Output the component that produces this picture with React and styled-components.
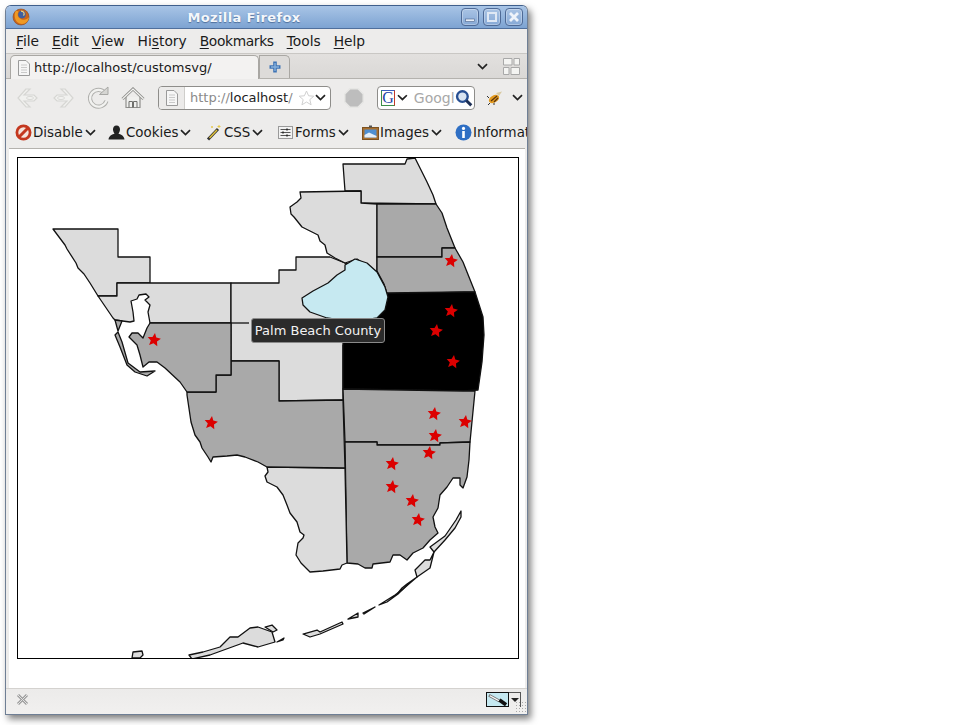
import React from "react";
import styled, { createGlobalStyle } from "styled-components";

const GlobalStyle = createGlobalStyle`
  html, body {
    margin: 0;
    padding: 0;
    background: #fff;
    font-family: "DejaVu Sans", sans-serif;
  }
`;

const LIGHT = "#dcdcdc";
const MID = "#a9a9a9";

const counties = [
  { fill: LIGHT, pts: "53,229 118,229 118,257 150,257 150,283 117,283 117,296 98,296 90,283 84,274 78,268 76,263 67,249 65,245" },
  { fill: LIGHT, pts: "117,283 231,283 231,323 150,323 148,312 150,305 145,300 149,297 146,294 139,295 137,299 131,301 133,312 134,321 130,322 115,320 113,318 98,296 117,296" },
  { fill: MID, pts: "115,320 122,321 118,331" },
  { fill: LIGHT, pts: "231,283 279,283 279,270 296,270 296,257 330,257 345,263 377,272 388,297 377,330 343,345 343,400 279,401 279,361 231,361" },
  { fill: LIGHT, pts: "343,164 405,164 407,159 415,158 420,168 427,182 433,195 436,204 361,203 361,191 345,191" },
  { fill: LIGHT, pts: "300,192 361,191 361,203 377,204 377,272 357,259 345,263 335,258 327,253 325,245 320,241 318,235 310,231 302,227 294,217 291,214 290,207 297,202 301,198" },
  { fill: MID, pts: "377,204 436,204 442,213 447,228 455,248 442,248 442,257 377,257" },
  { fill: MID, pts: "377,257 442,257 442,248 455,248 463,262 475,292 387,294 384,284 377,271" },
  { fill: "#000", pts: "387,293 465,292 475,292 483,317 484,335 482,362 478,390 463,391 343,389 343,330 375,318 385,305" },
  { fill: MID, pts: "343,389 463,391 475,391 470,442 440,443 440,445 377,445 377,442 345,442" },
  { fill: MID, pts: "345,442 377,442 377,445 440,445 440,443 470,442 469,460 467,477 463,488 460,485 460,478 453,478 447,487 440,495 438,508 433,517 435,527 438,533 430,540 423,548 413,553 407,560 400,555 393,555 390,562 373,564 372,568 365,568 358,564 347,563" },
  { fill: LIGHT, pts: "267,467 345,468 347,563 342,565 340,569 323,571 310,572 301,563 296,555 298,543 303,538 304,535 300,532 297,522 290,513 287,505 283,495 277,487 267,482 265,476 268,472" },
  { fill: MID, pts: "187,392 216,392 216,375 231,375 231,361 279,361 279,401 343,400 345,468 267,467 258,462 245,457 237,455 227,456 213,457 211,462 208,457 202,448 200,442 195,435 191,422 187,395" },
  { fill: MID, pts: "150,323 231,323 231,375 216,375 216,392 187,392 180,382 165,368 157,362 149,362 143,367 140,355 137,345 129,337 132,333 138,333 143,338 147,328" },
  { fill: MID, pts: "115,335 118,332 122,342 128,363 140,372 155,371 147,376 135,372 127,365 120,347" },
  { fill: "#c6e9f1", pts: "345,265 355,259 367,263 377,272 385,287 388,297 385,310 377,318 353,322 327,318 310,312 303,305 302,298 313,291 328,283 337,275 345,270" },
  { fill: LIGHT, pts: "189,655 192,659 210,655 243,643 258,647 275,642 272,632 258,627 250,628 238,637 230,637 220,647 203,652" },
  { fill: LIGHT, pts: "265,627 272,625 277,630 273,632" },
  { fill: LIGHT, pts: "132,658 133,652 142,651 143,655 140,658" },
  { fill: LIGHT, pts: "277,642 284,638 283,640" },
  { fill: LIGHT, pts: "303,634 317,630 320,632 342,622 343,624 320,634 310,637" },
  { fill: LIGHT, pts: "348,619 358,613 358,617" },
  { fill: LIGHT, pts: "363,613 375,607 364,614" },
  { fill: LIGHT, pts: "379,605 387,600 395,595 403,589 408,584 402,590 398,594 387,602" },
  { fill: LIGHT, pts: "398,593 402,588 407,584 417,577 410,583 402,590" },
  { fill: LIGHT, pts: "425,560 430,560 434,552 430,568 417,577 415,570" },
  { fill: LIGHT, pts: "461,511 461,517 455,528 445,540 434,552 430,547 445,536 456,520" },
];

const stars = [
  [154, 340], [211, 423], [451, 261], [451, 311], [436, 331], [453, 362], [434, 414],
  [465, 422], [435, 436], [429, 453], [392, 464], [392, 487], [412, 501], [418, 520],
];

function starPoints(cx, cy) {
  const out = [];
  for (let i = 0; i < 10; i++) {
    const r = i % 2 === 0 ? 7 : 3.3;
    const a = ((i * 36 - 82) * Math.PI) / 180;
    out.push(`${(cx + r * Math.cos(a)).toFixed(1)},${(cy + r * Math.sin(a)).toFixed(1)}`);
  }
  return out.join(" ");
}

const menus = [
  ["F", "ile"],
  ["E", "dit"],
  ["V", "iew"],
  ["Hi", "s", "tory"],
  ["B", "ookmarks"],
  ["T", "ools"],
  ["H", "elp"],
];

function Chevron() {
  return (
    <svg width="11" height="7" viewBox="0 0 11 7">
      <path d="M1 1.2 L5.5 5.5 L10 1.2" fill="none" stroke="#222" strokeWidth="1.7" />
    </svg>
  );
}

function PageIcon() {
  return (
    <svg width="14" height="16" viewBox="0 0 14 16">
      <path d="M1.5 .5 H9 L12.5 4 V15.5 H1.5 Z" fill="#f6f6f6" stroke="#9a9a9a" />
      <path d="M4 5 H10 M4 7.5 H10 M4 10 H10 M4 12.5 H10" stroke="#c9c9c9" />
    </svg>
  );
}

function Logo() {
  return (
    <svg width="18" height="18" viewBox="0 0 18 18">
      <circle cx="9" cy="9" r="8" fill="#c9641c" stroke="#8a4a1c" strokeWidth=".6" />
      <circle cx="10" cy="6.6" r="3.8" fill="#3f5f9f" />
      <path d="M4 2.5 C1 7 3 16 10 16 C14 16 16.5 13 17 9 C15 12 11 12.6 8 10.6 C5.6 9 5 6 6.5 3.5 Z" fill="#ef9a24" />
      <path d="M9 3.2 C12 3.2 13 5.6 11.5 7.6" fill="none" stroke="#f4d27a" strokeWidth="1.2" />
    </svg>
  );
}

function WinButton({ kind }) {
  return (
    <WinBtn>
      <svg width="12" height="12" viewBox="0 0 12 12">
        {kind === "min" && <rect x="1.5" y="8" width="9" height="2.6" fill="#e8eef7" stroke="#47618a" strokeWidth=".6" />}
        {kind === "max" && <rect x="2" y="2" width="8" height="8" fill="none" stroke="#dfe8f4" strokeWidth="2" />}
        {kind === "close" && <path d="M2 2 L10 10 M10 2 L2 10" stroke="#eef3fa" strokeWidth="2.8" />}
      </svg>
    </WinBtn>
  );
}

const bookmarkIcons = {
  disable: (
    <svg width="17" height="17" viewBox="0 0 17 17">
      <circle cx="8.5" cy="8.5" r="6.6" fill="#f4e4dc" stroke="#c4381f" strokeWidth="2.8" />
      <path d="M4 13 L13 4" stroke="#c4381f" strokeWidth="3" />
    </svg>
  ),
  cookies: (
    <svg width="17" height="15" viewBox="0 0 17 15">
      <path d="M8.5 .5 C11 .5 12 2.4 12 4.4 C12 6.4 11 7.6 10.4 8.6 C12.5 9.6 16 10.5 16.5 14.5 H.5 C1 10.5 4.5 9.6 6.6 8.6 C6 7.6 5 6.4 5 4.4 C5 2.4 6 .5 8.5 .5 Z" fill="#222" />
    </svg>
  ),
  css: (
    <svg width="17" height="17" viewBox="0 0 17 17">
      <path d="M2 15.5 L12 5" stroke="#333" strokeWidth="3" />
      <path d="M3.5 14 L11 6" stroke="#e2c33a" strokeWidth="1.4" />
      <path d="M13 1 V4 M11.5 2.5 H14.5 M6 2 V4 M5 3 H7" stroke="#e6c84a" />
    </svg>
  ),
  forms: (
    <svg width="15" height="15" viewBox="0 0 15 15">
      <rect x=".5" y="1.5" width="14" height="12" fill="#f2f2f2" stroke="#9a9a9a" />
      <path d="M2.5 4.5 H12.5 M2.5 7.5 H12.5 M2.5 10.5 H12.5" stroke="#555" />
      <path d="M9 3.5 V5.5 M5 6.5 V8.5 M9 9.5 V11.5" stroke="#222" strokeWidth="1.4" />
    </svg>
  ),
  images: (
    <svg width="17" height="15" viewBox="0 0 17 15">
      <rect x=".5" y="2.5" width="16" height="12" fill="#a86f2e" stroke="#7d5220" />
      <rect x="2.5" y="4.5" width="12" height="8" fill="#4f8fd0" />
      <path d="M2.5 10 L7 7.5 L14.5 11 V12.5 H2.5 Z" fill="#e6f0f8" />
      <rect x="7" y=".5" width="3" height="2" fill="#555" />
    </svg>
  ),
  info: (
    <svg width="17" height="17" viewBox="0 0 17 17">
      <circle cx="8.5" cy="8.5" r="8" fill="#2f6fc4" />
      <circle cx="8.5" cy="4.4" r="1.6" fill="#fff" />
      <rect x="7.2" y="7" width="2.6" height="7" fill="#fff" />
    </svg>
  ),
};

const bookmarks = [
  { icon: "disable", label: "Disable", width: 93 },
  { icon: "cookies", label: "Cookies", width: 98 },
  { icon: "css", label: "CSS", width: 71 },
  { icon: "forms", label: "Forms", width: 85 },
  { icon: "images", label: "Images", width: 93 },
];

export default function App() {
  return (
    <>
      <GlobalStyle />
      <Page>
        <Window>
          <TitleBar>
            <LogoSlot>
              <Logo />
            </LogoSlot>
            <Title>Mozilla Firefox</Title>
            <WinButtons>
              <WinButton kind="min" />
              <WinButton kind="max" />
              <WinButton kind="close" />
            </WinButtons>
          </TitleBar>

          <MenuBar>
            {menus.map((m) => (
              <MenuItem key={m.join("")} $tight={m[1] === "ookmarks"}>
                {m.length === 3 ? (
                  <>
                    {m[0]}
                    <u>{m[1]}</u>
                    {m[2]}
                  </>
                ) : (
                  <>
                    <u>{m[0]}</u>
                    {m[1]}
                  </>
                )}
              </MenuItem>
            ))}
          </MenuBar>

          <TabBar>
            <Tab>
              <PageIcon />
              <span>http://localhost/customsvg/</span>
            </Tab>
            <NewTab>
              <svg width="14" height="14" viewBox="0 0 14 14">
                <path d="M7 1.5 V12.5 M1.5 7 H12.5" stroke="#3f74b5" strokeWidth="3.6" />
                <path d="M7 3 V11 M3 7 H11" stroke="#86b0dc" strokeWidth="1.4" />
              </svg>
            </NewTab>
            <TabTools>
              <Chevron />
              <svg width="17" height="17" viewBox="0 0 17 17">
                <path d="M.5 .5 H9 V7 H.5 Z M11 .5 H16.5 V7 H11 Z M.5 9.5 H6 V16.5 H.5 Z M8 9.5 H16.5 V16.5 H8 Z" fill="#f4f4f2" stroke="#a8a8a8" />
              </svg>
            </TabTools>
          </TabBar>

          <NavBar>
            <NavIcon>
              <svg width="24" height="22" viewBox="0 0 24 22">
                <path d="M10 2 L2 11 L10 20 L14 20 L8 14 H18 L21 11 L18 8 H8 L14 2 Z" fill="#f1f1ef" stroke="#d6d6d3" strokeWidth="1.2" />
                <ellipse cx="14" cy="11" rx="3.5" ry="1.6" fill="none" stroke="#dadad7" />
              </svg>
            </NavIcon>
            <NavIcon>
              <svg width="24" height="22" viewBox="0 0 24 22">
                <path d="M14 2 L22 11 L14 20 L10 20 L16 14 H6 L3 11 L6 8 H16 L10 2 Z" fill="#f1f1ef" stroke="#d6d6d3" strokeWidth="1.2" />
                <ellipse cx="10" cy="11" rx="3.5" ry="1.6" fill="none" stroke="#dadad7" />
              </svg>
            </NavIcon>
            <NavIcon>
              <svg width="24" height="24" viewBox="0 0 24 24">
                <path d="M19 7 A8.4 8.4 0 1 0 20.4 15" fill="none" stroke="#b0b0ad" strokeWidth="4.2" />
                <path d="M19 7 A8.4 8.4 0 1 0 20.4 15" fill="none" stroke="#f2f2f0" strokeWidth="2.2" />
                <path d="M13.5 8.5 H22 V1 Z" fill="#d6d6d3" stroke="#a8a8a5" />
              </svg>
            </NavIcon>
            <NavIcon>
              <svg width="24" height="22" viewBox="0 0 24 22">
                <path d="M5 10 V20.5 H19 V10" fill="#f0f0ee" stroke="#8f8f8c" strokeWidth="1.2" />
                <path d="M1.5 12 L12 2 L22.5 12" fill="none" stroke="#8f8f8c" strokeWidth="3" />
                <path d="M1.5 12 L12 2 L22.5 12" fill="none" stroke="#f2f2f0" strokeWidth="1.2" />
                <path d="M8 20.5 V14.5 H11.5 V20.5 M12.5 20.5 V14.5 H16 V20.5" fill="none" stroke="#6f6f6c" />
              </svg>
            </NavIcon>
            <UrlBox>
              <UrlIconSlot>
                <PageIcon />
              </UrlIconSlot>
              <UrlText>
                http://<b>localhost</b>/
              </UrlText>
              <svg width="17" height="16" viewBox="0 0 17 16">
                <path d="M8.5 1 L10.6 5.8 L15.8 6.2 L11.8 9.6 L13.1 14.8 L8.5 12 L3.9 14.8 L5.2 9.6 L1.2 6.2 L6.4 5.8 Z" fill="#fff" stroke="#d0d0d0" />
              </svg>
              <Chevron />
            </UrlBox>
            <StopSlot>
              <svg width="20" height="20" viewBox="0 0 20 20">
                <path d="M6 .8 H14 L19.2 6 V14 L14 19.2 H6 L.8 14 V6 Z" fill="#bdbdbd" stroke="#e6e6e4" strokeWidth="1.4" />
              </svg>
            </StopSlot>
            <SearchBox>
              <EngineIcon>G</EngineIcon>
              <Chevron />
              <SearchText>Googl</SearchText>
              <svg width="18" height="18" viewBox="0 0 18 18">
                <circle cx="7.5" cy="7.5" r="5.4" fill="#d8e4f2" stroke="#274f92" strokeWidth="2.4" />
                <path d="M11.5 11.5 L16.5 16.5" stroke="#1d2f55" strokeWidth="3" />
              </svg>
            </SearchBox>
            <BugSlot>
              <svg width="18" height="16" viewBox="0 0 18 16">
                <ellipse cx="8" cy="9" rx="5.6" ry="3.6" fill="#e39a1e" transform="rotate(-30 8 9)" />
                <path d="M5 11 L11 6 M8 12 L12 8" stroke="#5a3510" strokeWidth="1.2" />
                <path d="M10 3 L16 1.5 L13 6 Z" fill="#d8c9a0" />
                <path d="M3 8 L1 6 M4 13 L2 15 M8 13 L8 15" stroke="#333" />
              </svg>
              <Chevron />
            </BugSlot>
          </NavBar>

          <BookmarkBar>
            {bookmarks.map((b) => (
              <BookmarkItem key={b.label} $width={b.width}>
                <BookmarkIcon>{bookmarkIcons[b.icon]}</BookmarkIcon>
                <span>{b.label}</span>
                <Chevron />
              </BookmarkItem>
            ))}
            <BookmarkItem>
              <BookmarkIcon>{bookmarkIcons.info}</BookmarkIcon>
              <span>Information</span>
            </BookmarkItem>
          </BookmarkBar>

          <Content>
            <MapFrame>
              <svg width="500" height="500" viewBox="18 158 500 500">
                {counties.map((c) => (
                  <polygon key={c.pts} points={c.pts} fill={c.fill} stroke="#111" strokeWidth="1.3" strokeLinejoin="round" />
                ))}
                <path d="M231 323 H249" stroke="#111" strokeWidth="1.3" />
                {stars.map(([x, y]) => (
                  <polygon key={`${x}-${y}`} points={starPoints(x, y)} fill="#dc0000" />
                ))}
              </svg>
              <Tooltip>Palm Beach County</Tooltip>
            </MapFrame>
          </Content>

          <StatusBar>
            <svg width="13" height="13" viewBox="0 0 13 13">
              <path d="M2 2 L11 11 M11 2 L2 11" stroke="#9d9d9d" strokeWidth="3" />
              <path d="M2 2 L11 11 M11 2 L2 11" stroke="#e2e2e2" strokeWidth="1" />
            </svg>
            <StatusRight>
              <PickerSwatch>
                <svg width="22" height="14" viewBox="0 0 22 14">
                  <path d="M2 2 L13 8" stroke="#777" strokeWidth="3" />
                  <path d="M3 2.5 L13 8" stroke="#fff" strokeWidth="1.2" />
                  <path d="M13 7 L20 12" stroke="#111" strokeWidth="4" />
                </svg>
              </PickerSwatch>
              <PickerArrow />
              <Grip />
            </StatusRight>
          </StatusBar>
        </Window>
      </Page>
    </>
  );
}

const Page = styled.div`
  padding: 5px 0 0 5px;
  width: 966px;
  height: 725px;
  box-sizing: border-box;
  overflow: hidden;
`;

const Window = styled.div`
  width: 523px;
  height: 710px;
  display: flex;
  flex-direction: column;
  box-sizing: border-box;
  background: #edeceb;
  border: 1px solid #6f7f95;
  border-top-color: #3f5f8c;
  border-radius: 6px 6px 0 0;
  box-shadow: 3px 4px 7px rgba(0, 0, 0, 0.5);
  font-size: 14px;
  color: #1a1a1a;
  overflow: hidden;
`;

const TitleBar = styled.div`
  height: 22px;
  flex: none;
  display: flex;
  align-items: center;
  position: relative;
  padding: 0 4px 0 6px;
  background: linear-gradient(#a8c4e6, #7da3d2);
  border-bottom: 1px solid #4f6f9c;
`;

const LogoSlot = styled.div`
  display: flex;
  width: 18px;
`;

const Title = styled.div`
  flex: 1;
  margin-right: 3px;
  text-align: center;
  font-weight: bold;
  font-size: 13px;
  letter-spacing: 0.35px;
  color: #f4f7fb;
  text-shadow: 0 1px 1px #4f6f9c;
`;

const WinButtons = styled.div`
  display: flex;
  gap: 4px;
`;

const WinBtn = styled.div`
  width: 18px;
  height: 18px;
  display: flex;
  align-items: center;
  justify-content: center;
  box-sizing: border-box;
  border: 1px solid #4e6a96;
  border-radius: 4px;
  background: linear-gradient(#a9c3e4, #86a9d6);
  box-shadow: inset 0 0 0 1px rgba(255, 255, 255, 0.3);
`;

const MenuBar = styled.div`
  height: 25px;
  flex: none;
  display: flex;
  align-items: center;
  gap: 13px;
  padding: 0 0 0 10px;
  box-sizing: border-box;
  font-size: 13.8px;
  border-bottom: 1px solid #c9c7c4;
`;

const MenuItem = styled.span`
  letter-spacing: ${(p) => (p.$tight ? "-0.35px" : "0")};
  u {
    text-underline-offset: 2px;
  }
`;

const TabBar = styled.div`
  height: 25px;
  flex: none;
  display: flex;
  align-items: flex-end;
  padding: 0 0 0 4px;
  box-sizing: border-box;
  background: linear-gradient(#e2e0de, #dad8d6);
  border-bottom: 1px solid #b4b2ae;
`;

const Tab = styled.div`
  width: 249px;
  height: 24px;
  display: flex;
  align-items: center;
  gap: 3px;
  padding: 0 0 0 6px;
  box-sizing: border-box;
  font-size: 13px;
  background: #f3f2f1;
  border: 1px solid #a9a7a3;
  border-bottom: none;
  border-radius: 5px 5px 0 0;
  margin-bottom: -1px;
`;

const NewTab = styled.div`
  width: 31px;
  height: 23px;
  display: flex;
  align-items: center;
  justify-content: center;
  box-sizing: border-box;
  background: #dddbd9;
  border: 1px solid #a9a7a3;
  border-bottom: none;
  border-radius: 0 5px 0 0;
`;

const TabTools = styled.div`
  margin-left: auto;
  height: 24px;
  display: flex;
  align-items: center;
  gap: 15px;
  padding-right: 7px;
`;

const NavBar = styled.div`
  height: 37px;
  flex: none;
  display: flex;
  align-items: center;
  padding: 0 0 0 10px;
  box-sizing: border-box;
  overflow: hidden;
`;

const NavIcon = styled.div`
  width: 24px;
  margin-right: 11px;
  display: flex;
  justify-content: center;
`;

const UrlBox = styled.div`
  width: 173px;
  height: 24px;
  margin-left: 2px;
  flex: none;
  display: flex;
  align-items: center;
  box-sizing: border-box;
  background: #fff;
  border: 1px solid #8e8d8a;
  border-radius: 4px;
  padding-right: 4px;
`;

const UrlIconSlot = styled.div`
  width: 25px;
  height: 100%;
  display: flex;
  align-items: center;
  justify-content: center;
  background: #ecebea;
  border-right: 1px solid #cfcecb;
  border-radius: 3px 0 0 3px;
`;

const UrlText = styled.span`
  flex: 1;
  padding-left: 5px;
  font-size: 13px;
  color: #8a8a8a;
  b {
    font-weight: normal;
    color: #222;
  }
`;

const StopSlot = styled.div`
  width: 46px;
  flex: none;
  display: flex;
  justify-content: center;
`;

const SearchBox = styled.div`
  width: 98px;
  height: 24px;
  flex: none;
  display: flex;
  align-items: center;
  box-sizing: border-box;
  background: #fff;
  border: 1px solid #8e8d8a;
  border-radius: 4px;
  padding: 0 1px 0 3px;
`;

const EngineIcon = styled.span`
  width: 14px;
  height: 16px;
  margin-right: 2px;
  display: flex;
  align-items: center;
  justify-content: center;
  flex: none;
  box-sizing: border-box;
  border: 1px solid #3d8f4a;
  border-top-color: #3b5fc0;
  border-right-color: #c23a2c;
  font-family: "Liberation Serif", serif;
  font-size: 16px;
  color: #2344a8;
`;

const SearchText = styled.span`
  width: 42px;
  margin-left: 6px;
  overflow: hidden;
  color: #a8a8a8;
`;

const BugSlot = styled.div`
  margin-left: 11px;
  display: flex;
  align-items: center;
  gap: 8px;
  flex: none;
`;

const BookmarkBar = styled.div`
  height: 32px;
  flex: none;
  display: flex;
  align-items: center;
  padding: 0 0 0 8px;
  box-sizing: border-box;
  font-size: 13.4px;
  overflow: hidden;
  white-space: nowrap;
`;

const BookmarkItem = styled.div`
  flex: none;
  width: ${(p) => (p.$width ? `${p.$width}px` : "auto")};
  display: flex;
  align-items: center;
  span {
    margin-right: 2px;
  }
`;

const BookmarkIcon = styled.div`
  display: flex;
  width: 18px;
  margin-right: 1px;
  justify-content: center;
`;

const Content = styled.div`
  flex: 1;
  background: #fff;
  padding: 8px 0 0 8px;
  margin: 0 2px 0 3px;
  border-top: 1px solid #b4b2ae;
`;

const MapFrame = styled.div`
  width: 502px;
  height: 502px;
  box-sizing: border-box;
  border: 1px solid #000;
  position: relative;
  svg {
    display: block;
  }
`;

const Tooltip = styled.div`
  position: absolute;
  left: 233px;
  top: 160px;
  width: 134px;
  height: 25px;
  box-sizing: border-box;
  display: flex;
  align-items: center;
  justify-content: center;
  background: #2b2b2b;
  border: 1px solid #8a8a8a;
  border-radius: 3px;
  color: #f2f2f2;
  font-size: 13px;
  white-space: nowrap;
`;

const StatusBar = styled.div`
  height: 26px;
  flex: none;
  display: flex;
  align-items: center;
  justify-content: space-between;
  padding: 0 0 4px 10px;
  box-sizing: border-box;
  background: linear-gradient(#ecebea, #f1f0ef);
  border-top: 1px solid #d4d2cf;
`;

const StatusRight = styled.div`
  display: flex;
  align-items: center;
  position: relative;
  padding-right: 6px;
`;

const PickerSwatch = styled.div`
  width: 23px;
  height: 15px;
  display: flex;
  box-sizing: border-box;
  border: 1px solid #111;
  background: #c6e9f1;
`;

const PickerArrow = styled.div`
  width: 12px;
  height: 15px;
  box-sizing: border-box;
  border: 1px solid #555;
  border-left: none;
  border-bottom: none;
  position: relative;
  &::after {
    content: "";
    position: absolute;
    left: 2px;
    top: 5px;
    border-left: 4px solid transparent;
    border-right: 4px solid transparent;
    border-top: 4px solid #222;
  }
`;

const Grip = styled.div`
  position: absolute;
  right: 0;
  bottom: -6px;
  width: 12px;
  height: 12px;
  background-image: radial-gradient(#aaa 35%, transparent 40%);
  background-size: 3px 3px;
`;
